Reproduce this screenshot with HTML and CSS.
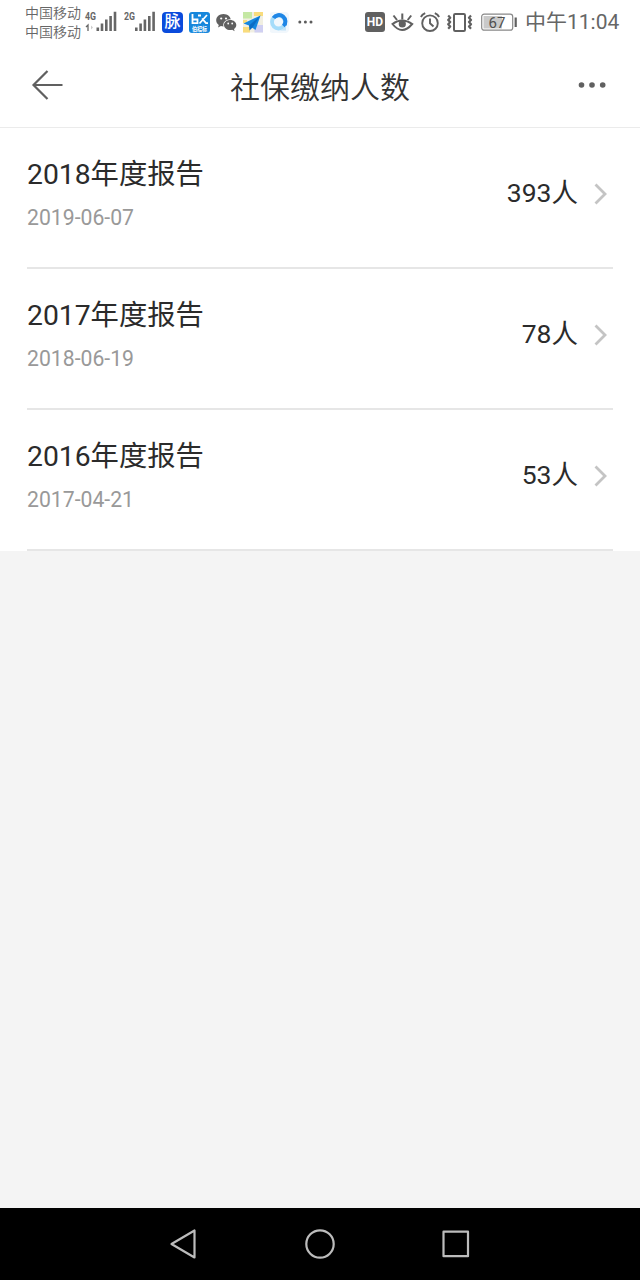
FILE: index.html
```
<!DOCTYPE html>
<html lang="zh-CN">
<head>
    <meta charset="UTF-8">
    <meta name="viewport" content="width=device-width, initial-scale=1.0">
    <title>社保缴纳人数</title>
    <link rel="stylesheet" href="styles.css">
</head>
<body>
    <!-- 状态栏 -->
    <div class="status-bar">
        <div class="status-group">
            <div class="carrier">
                <div>中国移动</div>
                <div>中国移动</div>
            </div>
            <svg width="34" height="24" viewBox="84 10 34 24">
                <text class="net" x="85" y="20" textLength="11" lengthAdjust="spacingAndGlyphs">4G</text>
                <path d="M86 27l2-2v6" fill="none" stroke="#666" stroke-width="1.3"/>
                <path d="M91 25.5l2 2-2 2z" fill="#ccc"/>
                <path fill="#666" d="M96.5 27.5h2.6V31h-2.6zM100.7 23.5h2.6V31h-2.6zM105 19.5h2.6V31h-2.6zM109.3 16h2.6v15h-2.6zM113.7 11.8h2.6V31h-2.6z"/>
            </svg>
            <svg width="32" height="24" viewBox="124 10 32 24">
                <text class="net" x="124" y="20" textLength="11" lengthAdjust="spacingAndGlyphs">2G</text>
                <path fill="#666" d="M135 27.5h2.6V31h-2.6zM139.3 23.5h2.6V31h-2.6zM143.6 19.5h2.6V31h-2.6zM148 16h2.6v15h-2.6zM152.3 11.8h2.6V31h-2.6z"/>
            </svg>
            <div class="app-icon maimai">脉</div>
            <svg width="21" height="21" viewBox="0 0 21 21">
                <rect width="21" height="21" rx="3" fill="#1787dc"/>
                <path d="M3.5 2v9.200h5V7.500h-5M9 3.500h3M18 3l-7.500 8.500M13 6.500l4 4.700h2" fill="none" stroke="#fff" stroke-width="1.8"/>
                <text class="mini" x="3" y="18.6" textLength="15" lengthAdjust="spacingAndGlyphs">伯招标</text>
            </svg>
            <svg width="21" height="21" viewBox="0 0 21 21">
                <path fill="#606060" d="M7.500 2C3.400 2 .2 4.800.2 8.300c0 1.900 1 3.600 2.600 4.700l-.8 2.600 2.900-1.500c.8.2 1.700.4 2.600.4 4.100 0 7.300-2.700 7.300-6.200S11.600 2 7.500 2z"/>
                <ellipse cx="14" cy="13" rx="6.8" ry="5.8" fill="#fff"/>
                <path fill="#606060" d="M14.200 8c-3.400 0-6.200 2.200-6.200 5s2.800 5.100 6.200 5.100c.7 0 1.400-.1 2-.3l2.400 1.500-.6-2.400c1.400-.9 2.300-2.300 2.300-3.900 0-2.800-2.700-5-6.100-5z"/>
                <g fill="#fff"><circle cx="5.2" cy="6.5" r="1.1"/><circle cx="10" cy="6.5" r="1.1"/><circle cx="12.2" cy="11.5" r=".9"/><circle cx="16.2" cy="11.5" r=".9"/></g>
            </svg>
            <svg width="21" height="21" viewBox="1 0 21 21">
                <path fill="#f1efe2" d="M1 0h20v20.500H1z"/>
                <path fill="#c5e8a4" d="M1 0h9v6.500H1z"/>
                <path fill="#f9dc7c" d="M12 0h9v4h-9zM1 8h4v3H1zM1 15h7v5.500H1z"/>
                <path fill="#d0d0f2" d="M12.500 13h8.500v7.500h-8.500z"/>
                <path fill="#1688e0" d="M18.500 3.500L1.500 11.500l5.500 2 6.500 4.500z"/>
                <path fill="#0c6cc4" d="M18.500 3.500L7 13.500l.5 5 2.800-2.700z"/>
            </svg>
            <svg width="21" height="21" viewBox="1 0 21 21">
                <rect width="20" height="21" rx="4" fill="#f1f7fc"/>
                <circle cx="9.5" cy="10" r="6.500" fill="none" stroke="#a5dcfa" stroke-width="3.8"/>
                <path d="M4.500 6a6.500 6.500 0 1 1 10 8.200" fill="none" stroke="#1e86e6" stroke-width="4"/>
                <path d="M9 18.500q5 0 8-5v5z" fill="#c4e4f8"/>
            </svg>
            <svg width="16" height="21" viewBox="0 0 16 21">
                <g fill="#5c5c5c"><circle cx="2.8" cy="10" r="1.5"/><circle cx="8.4" cy="10" r="1.5"/><circle cx="14" cy="10" r="1.5"/></g>
            </svg>
        </div>
        <div class="status-group">
            <div class="hd">HD</div>
            <svg width="23" height="21" viewBox="0 0 23 21">
                <g fill="none" stroke="#606060" stroke-width="2">
                    <path d="M1.500 12Q11 5 21.200 12Q11 24 1.500 12z"/>
                    <path d="M11.300 1.500v6M2.500 3.500l3.500 4.500M20.200 3.500l-3.500 4.500"/>
                </g>
                <circle cx="11.3" cy="12" r="3.6" fill="#606060"/>
            </svg>
            <svg width="21" height="21" viewBox="0 0 21 21">
                <g fill="none" stroke="#606060" stroke-width="1.9">
                    <circle cx="10" cy="11.2" r="7.8"/>
                    <path d="M10 6.500v4.800l3.500 3.200M.9 5Q2 2.500 5.200 1.200M19.100 5Q18 2.500 14.800 1.200"/>
                </g>
            </svg>
            <svg width="26" height="21" viewBox="0 0 26 21">
                <g fill="none" stroke="#606060">
                    <rect x="7" y="2" width="11" height="17" rx="1.2" stroke-width="2"/>
                    <path stroke-width="2.2" d="M1.200 3.500l2 2.200-2 2.200 2 2.200-2 2.200 2 2.200-2 2.200M24 3.500l-2 2.200 2 2.200-2 2.200 2 2.200-2 2.200 2 2.200" stroke-linejoin="round"/>
                </g>
            </svg>
            <svg width="40" height="21" viewBox="0 0 40 21">
                <rect x="2.7" y="2.2" width="31" height="16" rx="2.5" fill="#fff" stroke="#888" stroke-width="1.2"/>
                <path fill="#c9c9c9" d="M4.500 4h18.500v12.500h-18.500z"/>
                <path fill="#606060" d="M35.600 5.500h2.200v9.500h-2.200z"/>
                <text class="level" x="18" y="15.5" text-anchor="middle">67</text>
            </svg>
            <div class="time">中午11:04</div>
        </div>
    </div>

    <!-- 标题栏 -->
    <div class="header">
        <svg width="34" height="34" viewBox="0 0 34 34">
            <path d="M17.500 2L3.500 16l14 14M3.500 16h29" fill="none" stroke="#606060" stroke-width="2.2"/>
        </svg>
        <h1>社保缴纳人数</h1>
        <svg width="34" height="34" viewBox="0 0 34 34">
            <g fill="#606060"><circle cx="6.5" cy="16" r="2.8"/><circle cx="17" cy="16" r="2.8"/><circle cx="27.7" cy="16" r="2.8"/></g>
        </svg>
    </div>

    <!-- 年度报告列表 -->
    <div class="list">
        <div class="item">
            <div class="info">
                <div class="name">2018年度报告</div>
                <div class="date">2019-06-07</div>
            </div>
            <div class="count">393人</div>
            <svg class="arrow" width="14" height="22" viewBox="0 0 14 22"><path d="M2.500 1.500L12 11l-9.500 9.500"/></svg>
        </div>
        <div class="item">
            <div class="info">
                <div class="name">2017年度报告</div>
                <div class="date">2018-06-19</div>
            </div>
            <div class="count">78人</div>
            <svg class="arrow" width="14" height="22" viewBox="0 0 14 22"><path d="M2.500 1.500L12 11l-9.500 9.500"/></svg>
        </div>
        <div class="item">
            <div class="info">
                <div class="name">2016年度报告</div>
                <div class="date">2017-04-21</div>
            </div>
            <div class="count">53人</div>
            <svg class="arrow" width="14" height="22" viewBox="0 0 14 22"><path d="M2.500 1.500L12 11l-9.500 9.500"/></svg>
        </div>
    </div>

    <!-- 底部导航键 -->
    <div class="nav-bar">
        <svg width="32" height="32" viewBox="0 0 32 32"><path d="M26.500 2.500v27L3.500 16z"/></svg>
        <svg width="32" height="32" viewBox="0 0 32 32"><circle cx="16" cy="16" r="13.7"/></svg>
        <svg width="32" height="32" viewBox="0 0 32 32"><rect x="3.5" y="3.7" width="24.5" height="24.5"/></svg>
    </div>
</body>
</html>
```

FILE: styles.css
```
body {
    font-family: Roboto, "Noto Sans CJK SC", sans-serif;
    display: flex;
    flex-direction: column;
    height: 100vh;
    margin: 0;
    background-color: #f4f4f4;
}
svg {
    display: block;
    flex: none;
}
.status-bar {
    display: flex;
    justify-content: space-between;
    height: 44px;
    padding: 0 21px 0 25px;
    background-color: white;
    color: #666;
}
.status-group {
    display: flex;
    align-items: center;
    gap: 6px;
    white-space: nowrap;
}
.carrier {
    width: 56px;
    margin-right: -3px;
    padding-top: 2px;
    font-size: 14px;
    font-weight: 350;
    line-height: 19px;
}
.net {
    font-size: 11px;
    font-weight: 700;
    fill: #666;
}
.app-icon {
    width: 21px;
    height: 21px;
    border-radius: 4px;
    color: white;
    font-size: 16px;
    font-weight: 500;
    line-height: 20px;
    text-align: center;
}
.maimai { background-color: #0a4bdc; }
.mini {
    font-size: 6px;
    font-weight: 700;
    fill: white;
}
.hd {
    width: 20px;
    height: 20px;
    border-radius: 3px;
    background-color: #606060;
    color: white;
    font-size: 12px;
    font-weight: 700;
    line-height: 20px;
    text-align: center;
}
.level {
    font-size: 15px;
    fill: #505050;
}
.time {
    width: 94px;
    font-size: 21px;
    line-height: 46px;
}
.header {
    display: flex;
    justify-content: space-between;
    align-items: center;
    height: 83px;
    padding: 0 31px;
    border-bottom: 1px solid #ebebeb;
    background-color: white;
}
.header svg:first-child {
    margin-left: -1px;
    margin-right: 1px;
}
h1 {
    margin: 0;
    padding-top: 5px;
    color: #333;
    font-size: 30px;
    font-weight: 350;
    line-height: 44px;
}
.list {
    background-color: white;
}
.item {
    display: flex;
    align-items: center;
    box-sizing: border-box;
    height: 141px;
    margin: 0 27px;
    padding-right: 6px;
    border-bottom: 2px solid #e6e6e6;
    color: #2b2b2b;
}
.info {
    flex: 1;
    padding-bottom: 6px;
}
.name {
    font-size: 28.3px;
    line-height: 46px;
}
.date {
    color: #999;
    font-size: 21.2px;
    line-height: 40px;
}
.count {
    margin-right: 15px;
    padding-bottom: 10px;
    font-size: 26.5px;
    line-height: 40px;
}
.arrow {
    margin-bottom: 8px;
}
.arrow path {
    fill: none;
    stroke: #c4c4c4;
    stroke-width: 2.8;
}
.nav-bar {
    display: flex;
    justify-content: center;
    align-items: center;
    gap: 104px;
    height: 72px;
    margin-top: auto;
    background-color: black;
}
.nav-bar svg {
    fill: none;
    stroke: #bcbcbc;
    stroke-width: 2.2;
    stroke-linejoin: round;
}
```
